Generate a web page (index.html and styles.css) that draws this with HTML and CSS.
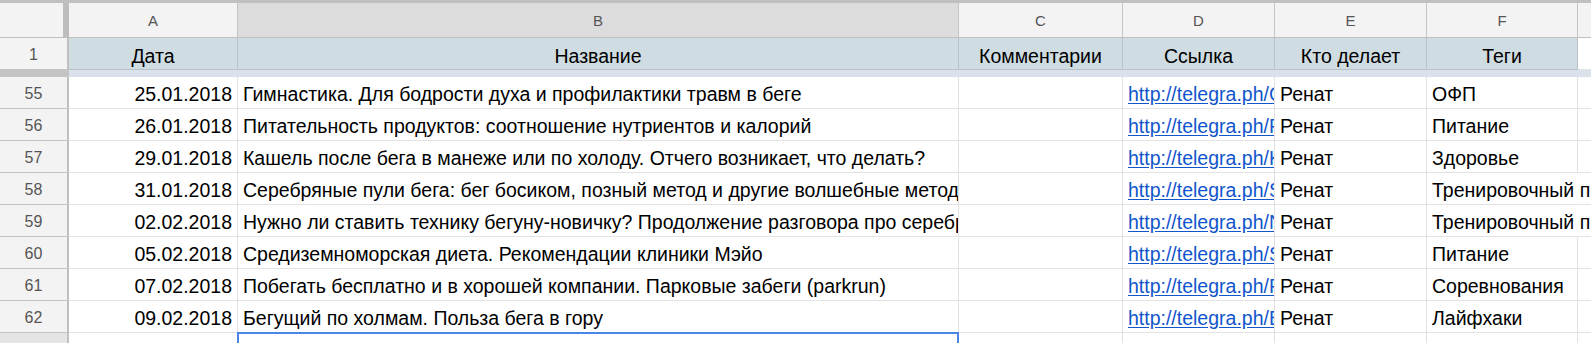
FILE: index.html
```html
<!DOCTYPE html>
<html lang="ru">
<head>
<meta charset="utf-8">
<title>Sheet</title>
<link rel="stylesheet" href="styles.css">
</head>
<body>
<div class="sheet">
  <div class="row letters">
    <div class="corner"></div>
    <div class="lh">A</div>
    <div class="lh sel">B</div>
    <div class="lh">C</div>
    <div class="lh">D</div>
    <div class="lh">E</div>
    <div class="lh">F</div>
    <div class="lh last"></div>
  </div>
  <div class="row frozen">
    <div class="rh">1</div>
    <div class="fc">Дата</div>
    <div class="fc">Название</div>
    <div class="fc">Комментарии</div>
    <div class="fc">Ссылка</div>
    <div class="fc">Кто делает</div>
    <div class="fc">Теги</div>
    <div class="fc empty"></div>
  </div>
  <div class="band"><div class="band-h"></div><div class="band-g"></div></div>

  <div class="row data">
    <div class="rh">55</div>
    <div class="c num">25.01.2018</div>
    <div class="c">Гимнастика. Для бодрости духа и профилактики травм в беге</div>
    <div class="c"></div>
    <div class="c"><a href="#">http://telegra.ph/Gimnastika-Dlya-bodrosti-duha-01-25</a></div>
    <div class="c">Ренат</div>
    <div class="c">ОФП</div>
    <div class="c g"></div>
  </div>
  <div class="row data">
    <div class="rh">56</div>
    <div class="c num">26.01.2018</div>
    <div class="c">Питательность продуктов: соотношение нутриентов и калорий</div>
    <div class="c"></div>
    <div class="c"><a href="#">http://telegra.ph/Pitatelnost-produktov-01-26</a></div>
    <div class="c">Ренат</div>
    <div class="c">Питание</div>
    <div class="c g"></div>
  </div>
  <div class="row data">
    <div class="rh">57</div>
    <div class="c num">29.01.2018</div>
    <div class="c">Кашель после бега в манеже или по холоду. Отчего возникает, что делать?</div>
    <div class="c"></div>
    <div class="c"><a href="#">http://telegra.ph/Kashel-posle-bega-01-29</a></div>
    <div class="c">Ренат</div>
    <div class="c">Здоровье</div>
    <div class="c g"></div>
  </div>
  <div class="row data">
    <div class="rh">58</div>
    <div class="c num">31.01.2018</div>
    <div class="c">Серебряные пули бега: бег босиком, позный метод и другие волшебные методы</div>
    <div class="c"></div>
    <div class="c"><a href="#">http://telegra.ph/Serebryanye-puli-bega-01-31</a></div>
    <div class="c">Ренат</div>
    <div class="c spill">Тренировочный процесс</div>
    <div class="c g"></div>
  </div>
  <div class="row data">
    <div class="rh">59</div>
    <div class="c num">02.02.2018</div>
    <div class="c">Нужно ли ставить технику бегуну-новичку? Продолжение разговора про серебряные пули</div>
    <div class="c"></div>
    <div class="c"><a href="#">http://telegra.ph/Nuzhno-li-stavit-tehniku-02-02</a></div>
    <div class="c">Ренат</div>
    <div class="c spill">Тренировочный процесс</div>
    <div class="c g"></div>
  </div>
  <div class="row data">
    <div class="rh">60</div>
    <div class="c num">05.02.2018</div>
    <div class="c">Средиземноморская диета. Рекомендации клиники Мэйо</div>
    <div class="c"></div>
    <div class="c"><a href="#">http://telegra.ph/Sredizemnomorskaya-dieta-02-05</a></div>
    <div class="c">Ренат</div>
    <div class="c">Питание</div>
    <div class="c g"></div>
  </div>
  <div class="row data">
    <div class="rh">61</div>
    <div class="c num">07.02.2018</div>
    <div class="c">Побегать бесплатно и в хорошей компании. Парковые забеги (parkrun)</div>
    <div class="c"></div>
    <div class="c"><a href="#">http://telegra.ph/Pobegat-besplatno-02-07</a></div>
    <div class="c">Ренат</div>
    <div class="c">Соревнования</div>
    <div class="c g"></div>
  </div>
  <div class="row data">
    <div class="rh">62</div>
    <div class="c num">09.02.2018</div>
    <div class="c">Бегущий по холмам. Польза бега в гору</div>
    <div class="c"></div>
    <div class="c"><a href="#">http://telegra.ph/Begushchij-po-holmam-02-09</a></div>
    <div class="c">Ренат</div>
    <div class="c">Лайфхаки</div>
    <div class="c g"></div>
  </div>
  <div class="row data">
    <div class="rh selrow"></div>
    <div class="c num"></div>
    <div class="c active"></div>
    <div class="c"></div>
    <div class="c"></div>
    <div class="c"></div>
    <div class="c"></div>
    <div class="c g"></div>
  </div>
</div>
</body>
</html>
```

FILE: styles.css
```css
* { box-sizing: border-box; }
html, body { margin: 0; padding: 0; background: #fff; }
body { font-family: "Liberation Sans", Arial, sans-serif; color: #000; overflow: hidden; width: 1591px; height: 343px; }

.sheet { border-top: 3px solid #c0c0c0; }

.row {
  display: grid;
  grid-template-columns: 69px 169px 721px 164px 152px 152px 151px 1fr;
}

/* column letters */
.letters { height: 35px; }
.corner { background: #f3f3f3; border-right: 6px solid #bdbdbd; border-bottom: 1px solid #c0c0c0; }
.lh {
  background: #f3f3f3;
  border-right: 1px solid #c4c4c4;
  border-bottom: 1px solid #c0c0c0;
  color: #555;
  font-size: 15px;
  display: flex; align-items: center; justify-content: center;
  padding-top: 1px;
}
.lh.sel { background: #dcdcdc; }
.lh.last { border-right: none; }

/* frozen header row */
.frozen { height: 32px; }
.rh {
  background: #f3f3f3;
  border-right: 2px solid #c0c0c0;
  border-bottom: 1px solid #c4c4c4;
  color: #555;
  font-size: 16px;
  display: flex; align-items: center; justify-content: center;
  padding-top: 2px;
}
.fc {
  background: #cfdce2;
  border-right: 1px solid #b8c2c7;
  border-bottom: 1px solid #b8c2c7;
  font-size: 19.5px;
  line-height: 23px;
  padding-top: 7px;
  text-align: center;
  white-space: nowrap; overflow: hidden;
}
.fc.empty { background: #fff; border-right: none; border-bottom-color: #e2e2e2; }

/* freeze bar */
.band { display: grid; grid-template-columns: 69px 1fr; height: 7px; }
.band-h { background: #c4c4c4; }
.band-g { background: #dbe1ea; }

/* data */
.data { height: 32px; }
.c {
  border-right: 1px solid #e2e2e2;
  border-bottom: 1px solid #e2e2e2;
  font-size: 19.5px;
  line-height: 23px;
  padding: 6px 5px 0 5px;
  white-space: nowrap; overflow: hidden;
}
.c.num { text-align: right; padding-right: 5px; }
.c a { color: #1155cc; text-decoration: underline; text-underline-offset: 2px; }
.c.spill { overflow: visible; border-right-color: transparent; }
.c.g { border-right: none; }
.rh.selrow { background: #e4e4e4; }

.c.active { position: relative; overflow: visible; }
.c.active::after {
  content: "";
  position: absolute;
  left: -1px; top: -1px; right: -1px; bottom: -1px;
  border: 2px solid #4a86e8;
}
```
